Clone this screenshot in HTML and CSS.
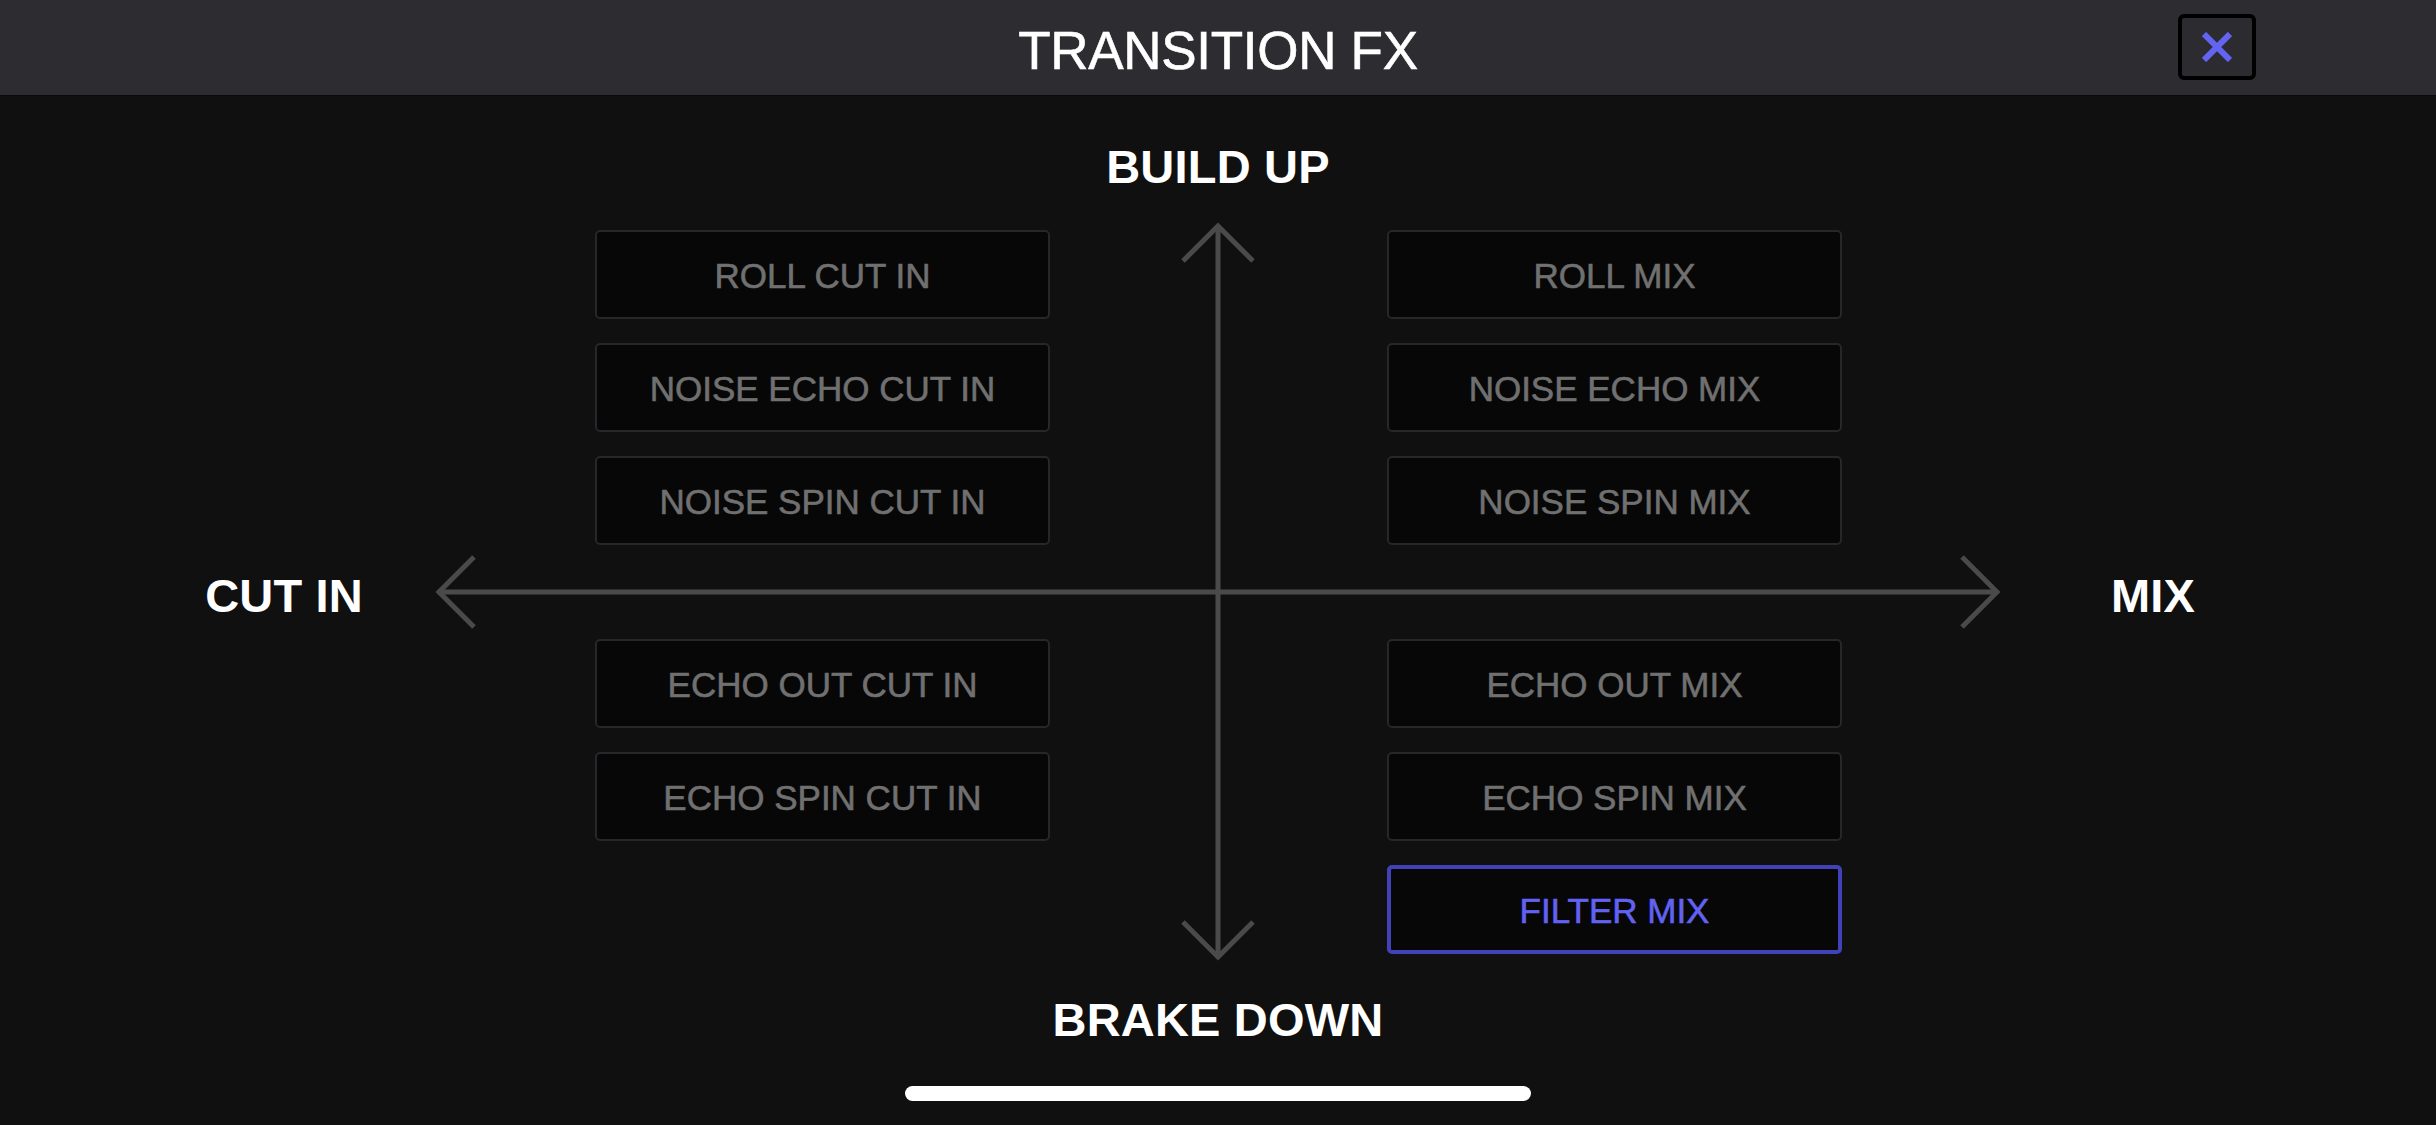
FILE: index.html
```html
<!DOCTYPE html>
<html lang="en">
<head>
<meta charset="utf-8">
<title>Transition FX</title>
<link rel="stylesheet" href="styles.css">
</head>
<body>
<div class="screen">
  <header class="topbar">
    <div class="topbar-spacer"></div>
    <h1 class="title">TRANSITION FX</h1>
    <button class="close-btn" aria-label="Close">
      <svg width="30" height="30" viewBox="0 0 30 30"><path d="M2 2 L28 28 M28 2 L2 28" stroke="#6464f2" stroke-width="6" fill="none"/></svg>
    </button>
  </header>

  <main class="main">
    <div class="axis-label axis-top">BUILD UP</div>

    <div class="middle">
      <div class="axis-label axis-left">CUT IN</div>

      <div class="diagram">
        <svg class="arrows" width="1564" height="737" viewBox="0 0 1564 737">
          <g stroke="#4a4a4a" stroke-width="5" fill="none" stroke-linejoin="miter">
            <path d="M2 369 H1562"/>
            <path d="M38 334 L3 369 L38 404"/>
            <path d="M1526 334 L1561 369 L1526 404"/>
            <path d="M782 2 V735"/>
            <path d="M747 38 L782 3 L817 38"/>
            <path d="M747 699 L782 734 L817 699"/>
          </g>
        </svg>

        <div class="quadrants">
          <div class="quadrant">
            <button class="fx-btn">ROLL CUT IN</button>
            <button class="fx-btn">NOISE ECHO CUT IN</button>
            <button class="fx-btn">NOISE SPIN CUT IN</button>
          </div>
          <div class="quadrant">
            <button class="fx-btn">ROLL MIX</button>
            <button class="fx-btn">NOISE ECHO MIX</button>
            <button class="fx-btn">NOISE SPIN MIX</button>
          </div>
          <div class="quadrant">
            <button class="fx-btn">ECHO OUT CUT IN</button>
            <button class="fx-btn">ECHO SPIN CUT IN</button>
          </div>
          <div class="quadrant">
            <button class="fx-btn">ECHO OUT MIX</button>
            <button class="fx-btn">ECHO SPIN MIX</button>
            <button class="fx-btn fx-btn-active">FILTER MIX</button>
          </div>
        </div>
      </div>

      <div class="axis-label axis-right">MIX</div>
    </div>

    <div class="axis-label axis-bottom">BRAKE DOWN</div>

    <div class="home-indicator"></div>
  </main>
</div>
</body>
</html>
```

FILE: styles.css
```css
* {
  box-sizing: border-box;
}

html, body {
  margin: 0;
  padding: 0;
  background: #101010;
}

body {
  font-family: "Liberation Sans", Arial, Helvetica, sans-serif;
  color: #ffffff;
  width: 2436px;
  height: 1125px;
  overflow: hidden;
}

.screen {
  width: 2436px;
  height: 1125px;
  display: flex;
  flex-direction: column;
}

.topbar {
  height: 96px;
  background: #2c2c31;
  border-bottom: 1px solid #0a0a0a;
  display: grid;
  grid-template-columns: 1fr auto 1fr;
  align-items: center;
}

.title {
  margin: 0;
  padding-top: 5px;
  font-size: 53px;
  line-height: 53px;
  font-weight: 400;
  color: #ffffff;
  letter-spacing: -0.3px;
  -webkit-text-stroke: 0.6px #ffffff;
}

.close-btn {
  justify-self: end;
  margin-right: 180px;
  margin-top: -1px;
  width: 78px;
  height: 66px;
  border: 4px solid #000000;
  border-radius: 6px;
  background: #2c2c30;
  padding: 0;
  display: flex;
  align-items: center;
  justify-content: center;
}

.main {
  flex: 1;
  display: flex;
  flex-direction: column;
  align-items: center;
}

.axis-label {
  font-size: 47px;
  line-height: 47px;
  font-weight: 700;
  color: #ffffff;
  white-space: nowrap;
  letter-spacing: 0.2px;
}

.axis-top {
  margin-top: 47px;
}

.middle {
  margin-top: 33px;
  width: 100%;
  display: grid;
  grid-template-columns: 1fr 1564px 1fr;
  height: 737px;
}

.axis-left {
  justify-self: end;
  align-self: center;
  margin-right: 73px;
  padding-top: 8px;
}

.axis-right {
  justify-self: start;
  align-self: center;
  margin-left: 111px;
  padding-top: 8px;
}

.diagram {
  position: relative;
  width: 1564px;
  height: 737px;
}

.arrows {
  position: absolute;
  left: 0;
  top: 0;
  overflow: visible;
}

.quadrants {
  position: relative;
  padding: 7px 0 0 159px;
  display: grid;
  grid-template-columns: 455px 455px;
  column-gap: 337px;
  row-gap: 94px;
  align-items: start;
}

.quadrant {
  display: flex;
  flex-direction: column;
  gap: 24px;
}

.fx-btn {
  height: 89px;
  width: 455px;
  background: #070707;
  border: 2px solid #27272b;
  border-radius: 5px;
  color: #707070;
  font-family: "Liberation Sans", Arial, Helvetica, sans-serif;
  font-size: 35px;
  font-weight: 400;
  -webkit-text-stroke: 0.6px #707070;
  padding: 3px 0 0 0;
  display: flex;
  align-items: center;
  justify-content: center;
}

.fx-btn-active {
  border: 4px solid #4141b8;
  color: #6262f2;
  -webkit-text-stroke: 0.6px #6262f2;
}

.axis-bottom {
  margin-top: 36px;
}

.home-indicator {
  margin-top: 43px;
  width: 626px;
  height: 15px;
  border-radius: 8px;
  background: #ffffff;
}
```
